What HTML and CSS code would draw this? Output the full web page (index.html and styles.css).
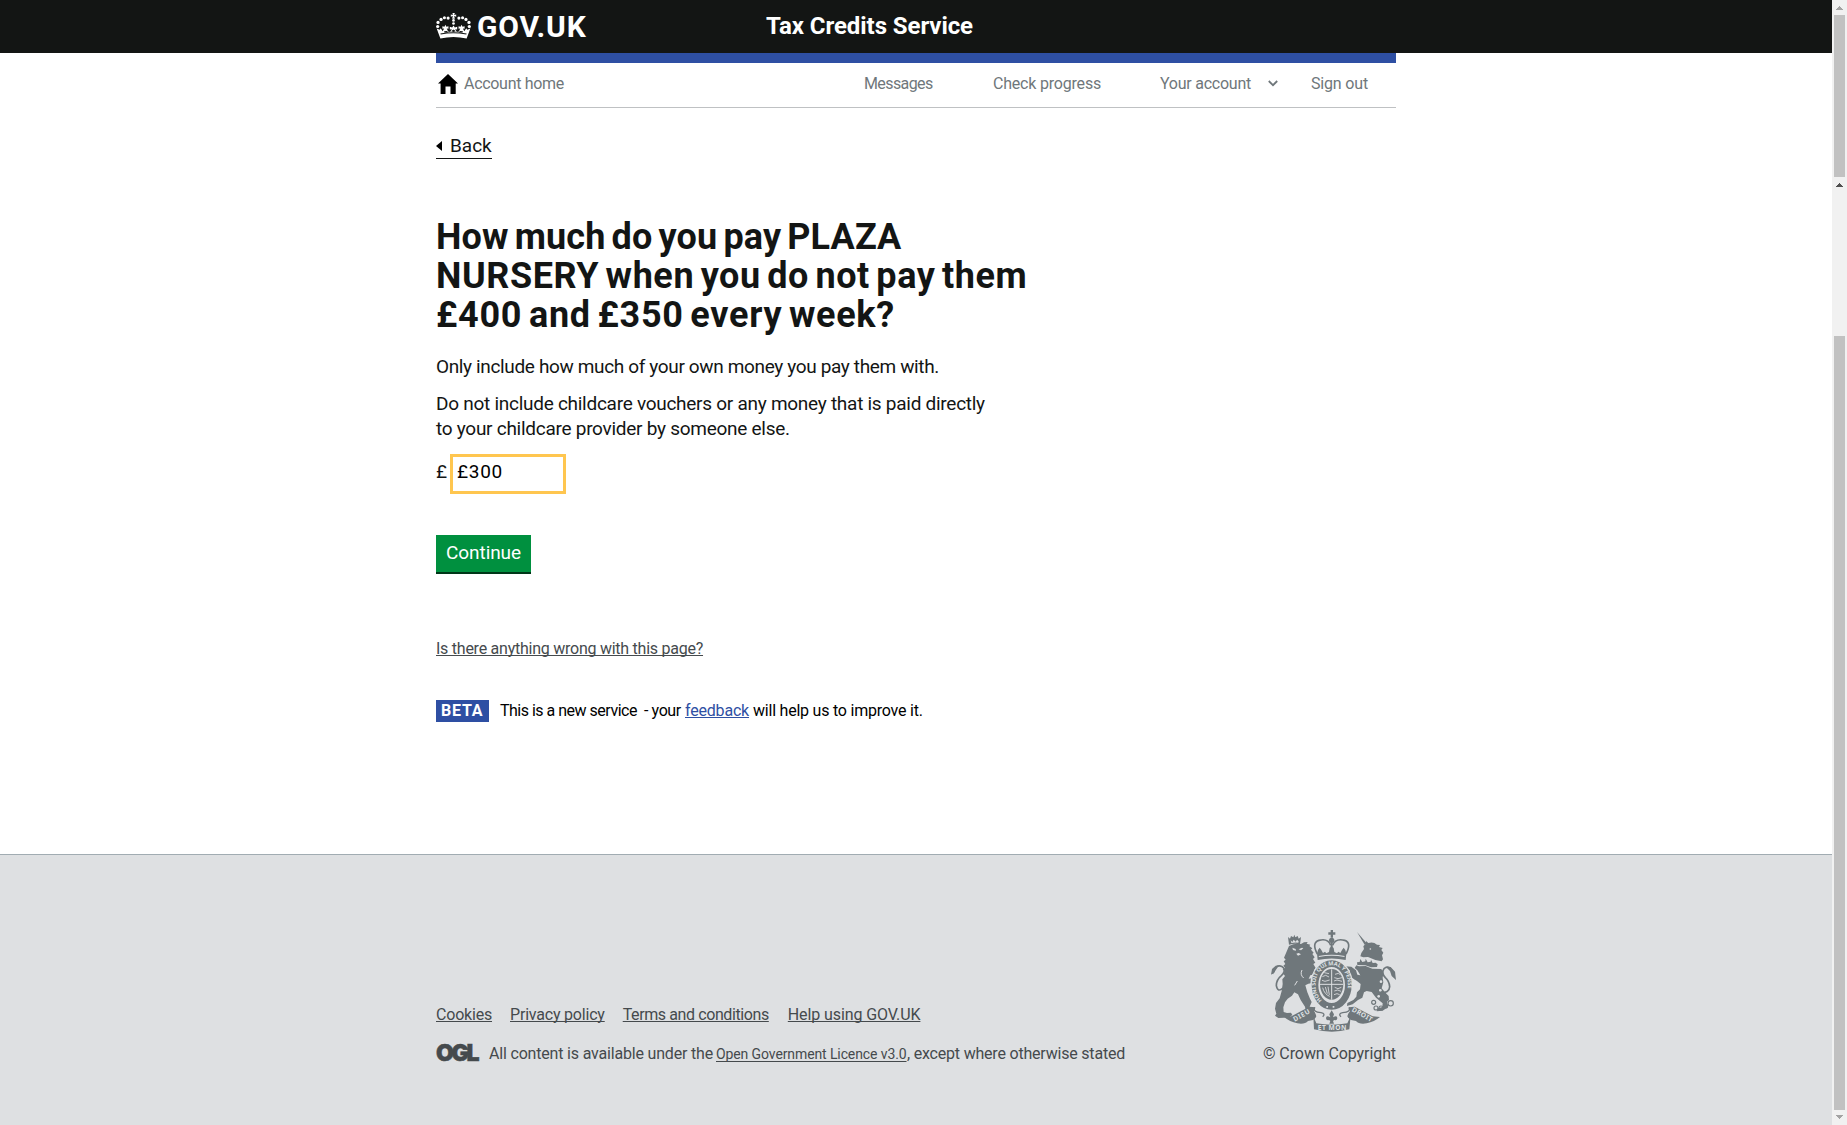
FILE: index.html
```html
<!DOCTYPE html>
<html lang="en">
<head>
<meta charset="utf-8">
<title>Tax Credits Service - GOV.UK</title>
<link rel="stylesheet" href="styles.css">
</head>
<body>
<div class="page">
  <header class="header">
    <div class="wrap header-row">
      <a class="logo">
        <svg class="crown" viewBox="18 24 104 77" fill="#fff">
          <path d="M67 24h7l-2 6 6-2v7l-6-2 2 8h-8l2-8-6 2v-7l6 2z"/>
          <circle cx="54" cy="39" r="4.6"/><circle cx="43" cy="38" r="4.6"/><circle cx="33" cy="43" r="4.8"/><circle cx="24" cy="52" r="4.8"/><circle cx="23" cy="64" r="4.8"/>
          <circle cx="86" cy="39" r="4.6"/><circle cx="97" cy="38" r="4.6"/><circle cx="107" cy="43" r="4.8"/><circle cx="116" cy="52" r="4.8"/><circle cx="117" cy="64" r="4.8"/>
          <circle cx="70" cy="46" r="4"/><circle cx="70" cy="55" r="4"/>
          <path d="M20 70l9 4 3-5 6 9 4-8-5 1v-8l6 2 3-6 3 6 6-2v8l-5-1 4 9 6 1 5-8-6 1v-8l7 2 4-6 4 6 7-2v8l-6-1 5 8 6-1 4-9-5 1v-8l6 2 3-6 3 6 6-2v8l-5-1 4 8 6-9 3 5 9-4-11 30q-39-10-78 0z"/>
          <path fill="#131514" d="M31 85q38-8 78 0l-1 3q-39-8-76 0zM42 78l8-1 5 4-12 1zM98 78l-8-1-5 4 12 1zM63 78l7-5 7 5-7 2z"/>
        </svg>
        <span>GOV.UK</span>
      </a>
      <span class="service">Tax Credits Service</span>
    </div>
  </header>

  <main class="wrap main">
    <nav class="account-nav">
      <a class="home">
        <svg width="20" height="20" viewBox="0 0 20 20"><path d="M10 0L20 9.6h-2.3V20h-5.2v-7.5h-5V20H2.6V9.6H0z"/></svg>
        <span>Account home</span>
      </a>
      <a class="messages">Messages</a>
      <a class="progress">Check progress</a>
      <a class="your">Your account
        <svg width="10" height="7" viewBox="0 0 10 7"><path d="M.8 1L5 5.2 9.2 1" fill="none" stroke="#6f777b" stroke-width="1.8"/></svg>
      </a>
      <a class="signout">Sign out</a>
    </nav>

    <a class="back"><svg width="6" height="10" viewBox="0 0 6 10"><path d="M0 5L6 0v10z"/></svg>Back</a>

    <h1><span class="h-a">How much do you pay PLAZA</span><br><span class="h-b">NURSERY when you do not pay them</span><br><span class="h-c">£400 and £350 every week?</span></h1>

    <p class="only">Only include how much of your own money you pay them with.</p>
    <p class="vouchers">Do not include childcare vouchers or any money that is paid directly<br>to your childcare provider by someone else.</p>

    <div class="amount"><span>£</span><div class="field">£300</div></div>
    <a class="continue">Continue</a>

    <a class="report">Is there anything wrong with this page?</a>

    <div class="phase">
      <strong>BETA</strong>
      <span class="new">This is a new service</span>
      <span class="dash">- your</span>
      <a class="feedback">feedback</a>
      <span class="improve">will help us to improve it.</span>
    </div>
  </main>

  <footer class="footer">
    <div class="wrap footer-row">
      <div class="meta">
        <div class="links">
          <a class="f-cookies">Cookies</a><a class="f-privacy">Privacy policy</a><a class="f-terms">Terms and conditions</a><a class="f-help">Help using GOV.UK</a>
        </div>
        <div class="licence">
          <span class="ogl">OGL</span>
          <span class="l-a">All content is available under the</span>
          <a>Open Government Licence v3.0</a><span class="l-b">, except where otherwise stated</span>
        </div>
      </div>
      <div class="copyright">
        <svg class="arms" viewBox="63 30 375 306" fill="#6f777b">
          <!-- royal crown -->
          <path d="M242 30h7v7h7v7h-7v9h-7v-9h-7v-7h7z"/>
          <g fill="none" stroke="#6f777b" stroke-width="5">
            <path d="M202 102Q184 68 207 61Q234 54 242 76"/>
            <path d="M288 102Q306 68 284 61Q256 54 248 76"/>
          </g>
          <circle cx="245" cy="61" r="8"/><path d="M242 66h6v30h-6z"/>
          <path d="M201 101l3-11 5-7 5 7 5 9 6-4 4 5 8-4 2-12 6-5 6 5 2 12 8 4 4-5 6 4 5-9 5-7 5 7 3 11-2 19q-42-9-84 0z"/>
          <path fill="#dee0e2" d="M206 108q39-7 78 0l-1 3q-38-7-76 0z"/>
          <!-- lion -->
          <path d="M114 51l6 5 3-8 7 4 3-8 3 8 7-4 3 8 7-5-3 22q-16-4-33 1z"/>
          <path fill="#dee0e2" d="M122 61l5 5 4-7 6 6 4-6 5 5-1 4q-11-2-21 1z"/>
          <path d="M117 78q16-9 36-6l9-5 11-1-3 5 11 3-3 4 9 7-4 4 8 9-4 4 7 10-5 5 7 11-6 4 7 12-4 5 6 12-5 2-13 3-5 10 12-1 8 6-4 12-5-4-12 2-9 5 6 21 8 19 5 10-6 14 5 8 10 2-3 7-13 2-11-7-2-12-13-20-8-17-11-6-7 10-13 9-8 11-5 15 1 14 10 3 12-1 4 7-8 6-17 2-17 1-10-7 4-6-4-15 3-17 11-14 6-22 3-21-1-14 8-10-5-7 5-8-7-4 7-6-5-6 6-5-5-8 6-5-5-6z"/>
          <path fill="#dee0e2" d="M127 83l10 4 1 5-9-2zM146 88l10-5 4 2-7 6zM139 101l7-2 7 4-9 4z"/>
          <path fill="none" stroke="#dee0e2" stroke-width="3" d="M156 150q-7 14 5 24M142 183l-8 13"/>
          <path fill="none" stroke="#6f777b" stroke-width="5" d="M99 204Q83 219 79 197Q79 179 94 167Q107 156 101 144Q94 134 82 139L67 161"/>
          <path d="M63 164l3-17 11-10 14-2-15 11-2 11z"/>
          <!-- unicorn -->
          <path d="M321 36l29 34-6 4z"/>
          <path d="M340 79l7-8 1-8 7 6q15-5 26 5l9 1-3 6 11 3-4 6 6 8-4 8 3 12-4 6-19-4-22-9-14 1-9-3 3-10 8-12z"/>
          <path d="M327 139l20-1 20 8 27 1 6 12-2 14 2 14-5 18 10 12 11 11 1 12-6 5 2 17-15 10-18 2 4-9 13-4 1-11-20-17-13-17-15-3-8 4-5 16-13 7-16 13-17 5 1-9 18-9 9-10 2-13 9-9 2-16-11-9-14-9-6-8-2-15-10-7-5 4 5 8 7 2-3 6-10-4-6-10 8-11 19 1 14 11 4 13 9 2-9-15-8-7 5-8z"/>
          <path d="M321 127l8-1 2-9 6 9 9-2 1-8 6 11 9-2 1-6 5 10 9-1 6 5-2 8-18 1-17-6-24-1z"/>
          <g fill="none" stroke="#6f777b" stroke-width="3.5">
            <circle cx="422" cy="250" r="8"/><circle cx="407" cy="258" r="6"/><circle cx="393" cy="264" r="6"/><circle cx="378" cy="264" r="6"/><circle cx="371" cy="247" r="6"/>
            <circle cx="318" cy="171" r="6"/>
          </g>
          <g fill="#dee0e2"><circle cx="361" cy="87" r="2.5"/><circle cx="393" cy="185" r="4"/><circle cx="391" cy="211" r="4"/><circle cx="386" cy="229" r="4"/></g>
          <path fill="none" stroke="#6f777b" stroke-width="5" d="M391 218Q418 220 419 200Q418 184 406 173Q393 158 402 146Q413 136 422 147L434 161"/>
          <path d="M438 180l-3-25-13-14-15-1 13 13 5 15z"/>
          <!-- motto ribbon -->
          <path d="M102 291l22-2 54-29 18 2-4 12 12 15-15 11-15 3q-10 11-32 7-23-5-40-19z"/>
          <path d="M390 291l-22-2-54-29-18 2 4 12-12 15 15 11 15 3q10 11 32 7 23-5 40-19z"/>
          <path fill="#dee0e2" d="M193 270l27 6 5 8-21 5 1 22-13-9 7-13zM298 270l-27 6-5 8 21 5-1 22 13-9-7-13z"/>
          <path d="M190 288l9 22q47 8 93 0l10-22-4 40q-52 14-106 0z"/>
          <path fill="none" stroke="#6f777b" stroke-width="4" d="M194 262Q187 276 213 278Q228 281 218 290M297 262Q304 276 278 278Q263 281 273 290"/>
          <!-- garter shield -->
          <ellipse cx="245" cy="195" rx="64" ry="78" fill="#dee0e2"/>
          <ellipse cx="245" cy="195" rx="50" ry="64" fill="none" stroke="#6f777b" stroke-width="20"/>
          <ellipse cx="245" cy="193" rx="35" ry="46"/>
          <path fill="none" stroke="#dee0e2" stroke-width="3" d="M245 148v91M210 193h70"/>
          <path fill="none" stroke="#dee0e2" stroke-width="2.5" d="M217 170l10-4 10 5M216 181l9 3 14-4M223 158l14 3M255 163l10-3 6 4M253 173l11 3 12-3M252 183l9-3 15 4M218 203q5 20 21 26M226 201l6 20M234 200l4 25M254 202l10 4 10-4M253 213l10-3 10 4M252 224l9-3 8 3"/>
          <path id="garter" fill="none" d="M216 241C179 207 197 136 245 136S311 207 274 241"/>
          <text class="garter-text"><textPath href="#garter" startOffset="0">HONI SOIT QUI MAL Y PENSE</textPath></text>
          <path fill="#dee0e2" d="M229 258h5v5h-5zM248 258h5v5h-5z"/>
          <!-- fleur-de-lis -->
          <path d="M245 271l7 12-3 9q13-8 13 3-1 8-9 5l-4 3 3 8h-14l3-8-4-3q-8 3-9-5 0-11 13-3l-3-9z"/>
          <text class="motto" transform="translate(134 305) rotate(-29)" textLength="54">DIEU</text>
          <text class="motto" x="203" y="331" textLength="86">ET MON</text>
          <text class="motto" transform="translate(304 273) rotate(29)" textLength="67">DROIT</text>
        </svg>
        <span>© Crown Copyright</span>
      </div>
    </div>
  </footer>
</div>

<div class="scrollbar">
  <svg class="a1" width="7" height="4" viewBox="0 0 7 4"><path fill="#a3a3a3" d="M3 0h1v1h1v1h1v1h1v1H0V3h1V2h1V1h1z"/></svg>
  <div class="thumb upper"></div>
  <svg class="a2" width="7" height="4" viewBox="0 0 7 4"><path fill="#505050" d="M3 0h1v1h1v1h1v1h1v1H0V3h1V2h1V1h1z"/></svg>
  <div class="thumb lower"></div>
  <svg class="a3" width="7" height="4" viewBox="0 0 7 4"><path fill="#a3a3a3" d="M3 4h1V3h1V2h1V1h1V0H0v1h1v1h1v1h1z"/></svg>
</div>
</body>
</html>
```

FILE: styles.css
```css
* { box-sizing: border-box; }
body {
  margin: 0;
  display: flex;
  height: 1125px;
  overflow: hidden;
  background: #fff;
  color: #131514;
  font-family: Roboto, "Liberation Sans", sans-serif;
  font-size: 16px;
  line-height: 20px;
}
svg { display: block; flex: none; }
h1, p { margin: 0; }
.page { flex: 1; display: flex; flex-direction: column; }
.wrap { width: 960px; margin: 0 auto; }

.header { height: 53px; background: #131514; color: #fff; }
.header-row { display: flex; font-weight: 700; white-space: nowrap; }
.logo { display: flex; width: 330px; font-size: 30px; line-height: 36px; letter-spacing: .8px; padding-top: 9px; }
.crown { width: 35px; height: 26px; margin: 4px 6px 0 0; }
.service { font-size: 24px; line-height: 30px; padding-top: 11px; letter-spacing: -.07px; }

.main { height: 801px; border-top: 10px solid #2e4fa3; display: flex; flex-direction: column; align-items: flex-start; }
.account-nav { display: flex; width: 960px; height: 45px; padding-top: 11px; border-bottom: 1px solid #bfc1c3; color: #6f777b; white-space: nowrap; }
.account-nav a { display: block; }
.account-nav .home { display: flex; width: 428px; letter-spacing: -.3px; }
.home svg { margin: 0 6px 0 2px; }
.account-nav .messages { width: 129px; letter-spacing: -.6px; }
.account-nav .progress { width: 167px; letter-spacing: -.2px; }
.account-nav .your { display: flex; width: 151px; letter-spacing: -.24px; }
.your svg { margin: 6px 0 0 17px; }
.signout { letter-spacing: -.17px; }

.back { display: flex; align-items: center; gap: 8px; margin-top: 25px; height: 26px; font-size: 19px; line-height: 25px; border-bottom: 1px solid #131514; }
h1 { margin-top: 59px; font-size: 36px; line-height: 39px; font-weight: 700; white-space: nowrap; word-spacing: -3px; }
.h-a { letter-spacing: .14px; }
.h-b { letter-spacing: .57px; }
.h-c { letter-spacing: .72px; }
p { font-size: 19px; line-height: 25px; white-space: nowrap; }
.only { margin-top: 19px; letter-spacing: -.357px; }
.vouchers { margin-top: 12px; letter-spacing: -.27px; }

.amount { display: flex; margin-top: 13px; font-size: 19px; line-height: 25px; }
.amount > span { width: 14px; padding-top: 5px; }
.field { width: 116px; height: 40px; border: 3px solid #ffc64f; padding: 2px 4px; color: #000; letter-spacing: .7px; }
.continue { display: block; margin-top: 41px; height: 39px; padding: 5px 10px 0; width: 95px; background: #00903f; border-bottom: 2px solid #003618; color: #fff; font-size: 19px; line-height: 25px; letter-spacing: -.07px; }

.report, .feedback, .links a, .licence a { text-decoration: underline; text-decoration-skip-ink: none; text-decoration-thickness: 1px; text-underline-offset: 1px; }
.report { margin-top: 65px; color: #454a4d; letter-spacing: -.248px; }
.phase { display: flex; margin-top: 41px; color: #000; white-space: nowrap; }
.phase strong { width: 53px; height: 22px; padding: 1px 0 0 5px; margin-right: 11px; background: #2e4fa3; color: #fff; letter-spacing: .8px; }
.phase span, .phase a { padding-top: 1px; }
.new { width: 144px; letter-spacing: -.5px; }
.dash { width: 41px; letter-spacing: -.4px; }
.feedback { width: 68px; letter-spacing: -.19px; color: #2e4fa3; }
.improve { letter-spacing: -.22px; }

.footer { flex: 1; background: #dee0e2; border-top: 1px solid #a1acb2; color: #454a4d; white-space: nowrap; }
.footer-row { display: flex; justify-content: space-between; padding-top: 75px; }
.meta { padding-top: 75px; }
.links { display: flex; }
.f-cookies { margin-right: 18px; letter-spacing: -.2px; }
.f-privacy { margin-right: 18px; letter-spacing: -.2px; }
.f-terms { margin-right: 19px; letter-spacing: -.4px; }
.f-help { letter-spacing: -.1px; }
.licence { display: flex; margin-top: 19px; }
.ogl { width: 53px; font: 900 23px/20px Inter, Roboto, sans-serif; letter-spacing: -2.4px; -webkit-text-stroke: .5px #454a4d; margin-top: -1px; }
.l-a { width: 227px; letter-spacing: -.183px; }
.licence a { width: 191px; font-size: 14px; line-height: 21px; letter-spacing: -.106px; text-underline-offset: 2px; }
.l-b { letter-spacing: -.2px; }
.copyright { display: flex; flex-direction: column; align-items: flex-end; letter-spacing: -.09px; }
.arms { width: 125px; height: 102px; margin-bottom: 12px; }
.motto { font: 700 20px "Noto Sans", sans-serif; fill: #dee0e2; }
.garter-text { font: 700 17px "Noto Sans", sans-serif; letter-spacing: -.4px; fill: #dee0e2; }

.scrollbar { width: 15px; background: #f1f1f1; display: flex; flex-direction: column; align-items: center; }
.thumb { width: 11px; background: #c1c1c1; }
.a1 { margin: 6px 0 5px; }
.upper { height: 162px; }
.a2 { margin: 6px 0 149px; }
.lower { height: 774px; }
.a3 { margin-top: 5px; }
```
